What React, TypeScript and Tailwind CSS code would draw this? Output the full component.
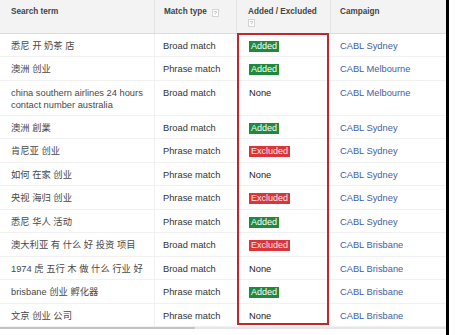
import React from 'react';

type Status = 'added' | 'excluded' | 'none';

interface Row {
  term: string[];
  match: string;
  status: Status;
  campaign: string;
}

const rows: Row[] = [
  { term: ['悉尼 开 奶茶 店'], match: 'Broad match', status: 'added', campaign: 'CABL Sydney' },
  { term: ['澳洲 创业'], match: 'Phrase match', status: 'added', campaign: 'CABL Melbourne' },
  {
    term: ['china southern airlines 24 hours', 'contact number australia'],
    match: 'Broad match',
    status: 'none',
    campaign: 'CABL Melbourne',
  },
  { term: ['澳洲 創業'], match: 'Broad match', status: 'added', campaign: 'CABL Sydney' },
  { term: ['肯尼亚 创业'], match: 'Phrase match', status: 'excluded', campaign: 'CABL Sydney' },
  { term: ['如何 在家 创业'], match: 'Phrase match', status: 'none', campaign: 'CABL Sydney' },
  { term: ['央视 海归 创业'], match: 'Phrase match', status: 'excluded', campaign: 'CABL Sydney' },
  { term: ['悉尼 华人 活动'], match: 'Phrase match', status: 'added', campaign: 'CABL Sydney' },
  { term: ['澳大利亚 有 什么 好 投资 项目'], match: 'Broad match', status: 'excluded', campaign: 'CABL Brisbane' },
  { term: ['1974 虎 五行 木 做 什么 行业 好'], match: 'Broad match', status: 'none', campaign: 'CABL Brisbane' },
  { term: ['brisbane 创业 孵化器'], match: 'Phrase match', status: 'added', campaign: 'CABL Brisbane' },
  { term: ['文京 创业 公司'], match: 'Phrase match', status: 'none', campaign: 'CABL Brisbane' },
];

const HelpBox = () => (
  <span className="inline-flex h-[8px] w-[7px] items-center justify-center border border-[#d4d4d4] bg-white text-[6px] leading-none font-normal text-[#aaa]">
    ?
  </span>
);

const StatusCell = ({ status }: { status: Status }) => {
  if (status === 'added') {
    return (
      <span className="inline-block bg-[#1f8a3d] px-[2px] text-[9px] leading-[11px] text-white">Added</span>
    );
  }
  if (status === 'excluded') {
    return (
      <span className="inline-block bg-[#d8353d] px-[2px] text-[9px] leading-[11px] text-[#fde8e8]">Excluded</span>
    );
  }
  return <span className="text-[#222]">None</span>;
};

export default function App() {
  return (
    <div
      className="flex h-[335px] w-[456px] bg-white"
      style={{ fontFamily: '"Liberation Sans", Arial, "Noto Sans CJK SC", sans-serif' }}
    >
      <div className="relative flex w-[446px] flex-col">
        {/* header */}
        <div className="grid h-[34px] grid-cols-[155px_82px_94px_115px] border-b border-[#dcdcdc] bg-[#f3f3f3] text-[8.2px] font-bold text-[#444]">
          <div className="border-r border-[#e2e2e2] pl-[11px] pt-[7px] leading-[10px]">Search term</div>
          <div className="flex items-start gap-[5px] border-r border-[#e2e2e2] pl-[9px] pt-[7px] leading-[10px]">
            <span>Match type</span>
            <span className="mt-[1px]">
              <HelpBox />
            </span>
          </div>
          <div className="flex flex-col items-start gap-[2px] border-r border-[#e2e2e2] pl-[11px] pt-[7px] leading-[10px]">
            <span>Added / Excluded</span>
            <HelpBox />
          </div>
          <div className="pl-[9px] pt-[7px] leading-[10px]">Campaign</div>
        </div>

        {/* body */}
        <div className="flex flex-col text-[9.3px] leading-[12px]">
          {rows.map((row, i) => (
            <div
              key={i}
              className={`grid grid-cols-[155px_82px_94px_115px] border-b border-[#f1f1f1] ${
                row.term.length > 1 ? 'h-[35px]' : 'h-[23.5px]'
              }`}
            >
              <div className="border-r border-[#f0f0f0] pl-[11px] pt-[6px] text-[#484848]">
                {row.term.map((t, j) => (
                  <div key={j}>{t}</div>
                ))}
              </div>
              <div className="pl-[8px] pt-[6px] text-[#333]">{row.match}</div>
              <div className="pl-[12px] pt-[6px]">
                <StatusCell status={row.status} />
              </div>
              <div className="pl-[9px] pt-[6px] text-[#4260a6]">{row.campaign}</div>
            </div>
          ))}
        </div>

        {/* bottom scroll line */}
        <div className="mt-auto mb-[6px] flex h-[2px]">
          <div className="w-[195px] bg-[#c4c4c4]" />
          <div className="flex-1 bg-[#e6e6e6]" />
        </div>

        {/* highlight box */}
        <div className="absolute left-[237px] top-[33px] h-[292px] w-[92px] border-2 border-[#c4262e]" />
      </div>
      <div className="w-[3px] bg-black" />
      <div className="flex-1 bg-white" />
    </div>
  );
}
